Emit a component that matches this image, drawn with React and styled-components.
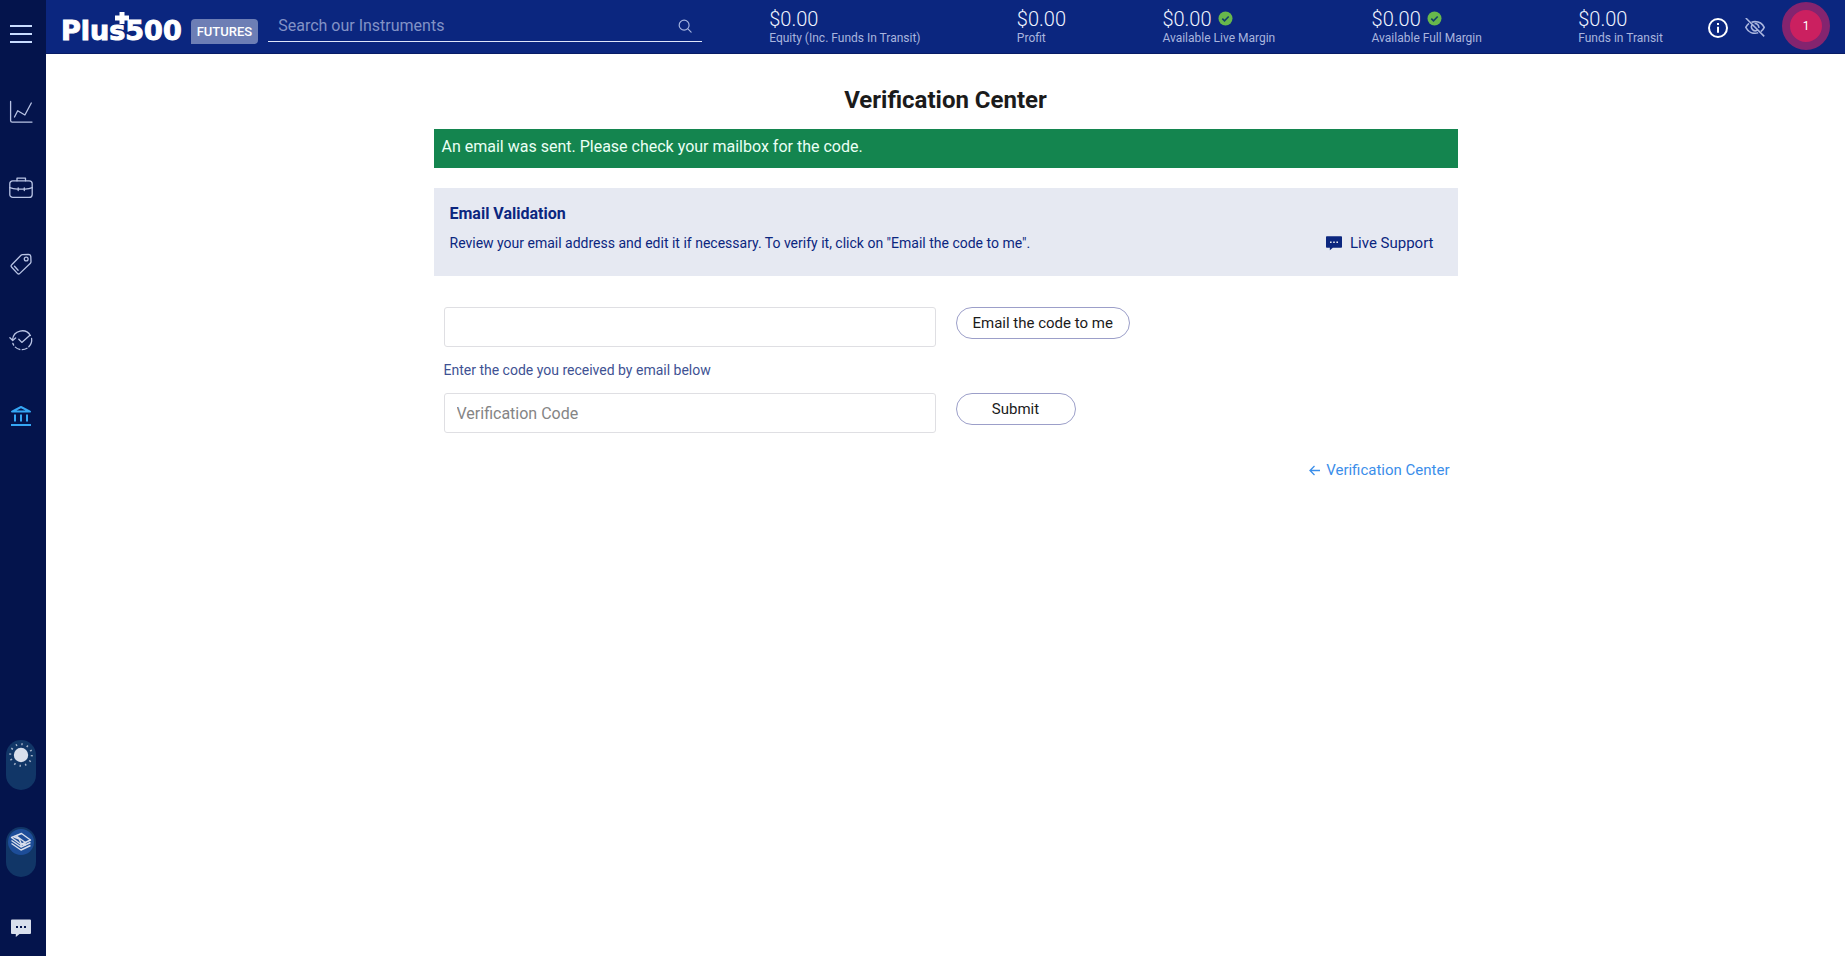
import styled, { createGlobalStyle } from "styled-components"

const GlobalStyle = createGlobalStyle`
    * {
        box-sizing: border-box;
    }
    body {
        margin: 0;
        background: #fff;
        color: #1b1b1b;
        font-family: Roboto, "Liberation Sans", sans-serif;
        font-size: 16px;
    }
    button, input {
        font-family: inherit;
    }
`

const Page = styled.div`
    display: flex;
    min-height: 100vh;
`

const Sidebar = styled.nav`
    width: 46px;
    flex-shrink: 0;
    display: flex;
    flex-direction: column;
    justify-content: space-between;
    align-items: flex-start;
    padding: 20px 0 14px;
    background: #04144c;
`

const SideGroup = styled.div`
    width: 42px;
    display: flex;
    flex-direction: column;
    align-items: center;
    gap: ${({ $gap }) => $gap}px;
`

const IconButton = styled.button`
    display: flex;
    align-items: center;
    justify-content: center;
    padding: 0;
    height: 28px;
    border: none;
    background: none;
    color: ${({ $color }) => $color};
    cursor: pointer;
`

const HeaderButton = styled(IconButton)`
    height: 32px;
    padding-top: 4px;
`

const SideLink = styled.a`
    display: flex;
    color: ${({ $active }) => ($active ? "#35a7f5" : "#b9c4e4")};
`

const Toggle = styled.button`
    display: flex;
    justify-content: center;
    align-items: flex-start;
    width: 30px;
    height: 50px;
    padding: 0;
    border: none;
    border-radius: 15px;
    background: #113667;
    color: #d9dfec;
    cursor: pointer;
`

const Content = styled.div`
    flex: 1;
    min-width: 0;
`

const TopBar = styled.header`
    display: flex;
    align-items: center;
    height: 54px;
    padding: 0 15px 2px;
    background: #0b267f;
    border-bottom: 1px solid #081c66;
`

const Logo = styled.a`
    position: relative;
    height: 28px;
    margin-right: 9px;
    color: #fff;
    font: bold 27px/38px "DejaVu Sans", sans-serif;
    -webkit-text-stroke: 1px #fff;
    text-decoration: none;
`

const LogoCross = styled.svg`
    position: absolute;
    top: 0;
    left: 54px;
`

const Badge = styled.span`
    height: 25px;
    margin: 11px 10px 0 0;
    padding: 0 6px;
    border-radius: 4px 4px 4px 0;
    background: #6d7eb5;
    color: #fff;
    font-size: 13px;
    font-weight: 500;
    line-height: 25px;
`

const SearchBox = styled.label`
    display: flex;
    align-items: center;
    width: 434px;
    height: 32px;
    margin-bottom: 9px;
    padding: 0 10px;
    align-self: flex-end;
    border-bottom: 1px solid #dfe6fa;
    color: #a4b3df;
`

const SearchInput = styled.input`
    flex: 1;
    min-width: 0;
    padding: 0;
    border: none;
    outline: none;
    background: none;
    color: #fff;
    font-size: 16px;
    &::placeholder {
        color: #8292c6;
        opacity: 1;
    }
`

const Stats = styled.dl`
    flex: 1;
    display: flex;
    justify-content: space-between;
    margin: 0 45px 0 67px;
`

const Stat = styled.div`
    display: flex;
    flex-direction: column-reverse;
    white-space: nowrap;
`

const StatLabel = styled.dt`
    color: #a9b5de;
    font-size: 12px;
    line-height: 14px;
`

const StatValue = styled.dd`
    display: flex;
    align-items: center;
    gap: 6px;
    margin: 0;
    color: #f1f5ff;
    font-size: 20px;
    font-weight: 300;
    line-height: 24px;
`

const Actions = styled.div`
    display: flex;
    align-items: center;
    gap: 17px;
`

const Notifications = styled.button`
    width: 48px;
    height: 48px;
    padding: 0;
    border: 8px solid #84246f;
    border-radius: 50%;
    background: #cb2060;
    color: #fff;
    font-size: 12px;
`

const Main = styled.main`
    max-width: 1024px;
    margin: 0 auto;
    padding-top: 30px;
`

const Title = styled.h1`
    margin: 0;
    font-size: 24px;
    font-weight: 700;
    line-height: 32px;
    text-align: center;
`

const Banner = styled.p`
    height: 39px;
    margin: 13px 0 20px;
    padding: 0 8px;
    background: #14854f;
    color: #eafff4;
    font-size: 16px;
    line-height: 35px;
`

const Panel = styled.section`
    padding: 17px 24px 22px 16px;
    background: #e6e9f2;
    color: #0b267f;
`

const PanelTitle = styled.h2`
    margin: 0 0 9px;
    font-size: 16px;
    font-weight: 700;
    line-height: 18px;
`

const PanelRow = styled.div`
    display: flex;
    justify-content: space-between;
    align-items: center;
    font-size: 14px;
    line-height: 22px;
`

const SupportLink = styled.a`
    display: flex;
    align-items: center;
    gap: 8px;
    color: inherit;
    font-size: 15px;
    text-decoration: none;
`

const Form = styled.form`
    display: grid;
    grid-template-columns: 492px 1fr;
    column-gap: 20px;
    align-items: start;
    justify-items: start;
    padding: 31px 10px 0;
`

const TextBox = styled.input`
    width: 100%;
    height: 40px;
    padding: 0 12px;
    border: 1px solid #dfdfe3;
    border-radius: 3px;
    background: #fff;
    color: #1b1b1b;
    font-size: 16px;
    &::placeholder {
        color: #858585;
        opacity: 1;
    }
`

const Hint = styled.label`
    grid-column: 1 / -1;
    color: #405293;
    font-size: 14px;
    line-height: 46px;
`

const PillButton = styled.button`
    min-width: 120px;
    height: 32px;
    padding: 0 16px;
    border: 1px solid #9c9fc9;
    border-radius: 16px;
    background: #fff;
    color: #1b1b1b;
    font-size: 15px;
    cursor: pointer;
`

const BackLink = styled.a`
    display: flex;
    align-items: center;
    justify-content: flex-end;
    gap: 6px;
    margin-top: 26px;
    padding-right: 8px;
    color: #3b8eea;
    font-size: 15px;
    line-height: 22px;
    text-decoration: none;
`

const MenuIcon = () => (
    <svg width="22" height="20" viewBox="0 0 22 20" stroke="currentColor" strokeWidth="2">
        <path d="M0 2h22M0 10h22M0 18h22" />
    </svg>
)

const LineIcon = ({ children, size = 24, width = 1.3 }) => (
    <svg
        width={size}
        height={size}
        viewBox="0 0 24 24"
        fill="none"
        stroke="currentColor"
        strokeWidth={width}
        strokeLinecap="round"
        strokeLinejoin="round"
    >
        {children}
    </svg>
)

const ChartIcon = () => (
    <LineIcon>
        <path d="M1.6 1.5v19a1.6 1.6 0 0 0 1.6 1.6H23" />
        <path d="M5.5 17l3.2-6.2 7.2 4.2L22.3 3" />
    </LineIcon>
)

const BriefcaseIcon = () => (
    <LineIcon>
        <path d="M8 4.8V2.2h8.5v2.6" />
        <rect x="0.8" y="4.8" width="22.4" height="16.6" rx="3" />
        <path d="M.8 11.6c2.5 1 5 1.4 7.6 1.6M10 13.2h4.6M16 13.2c2.6-.2 5-.6 7.2-1.6M9.2 11.8v2.8M15.3 11.8v2.8" />
    </LineIcon>
)

const TagIcon = () => (
    <LineIcon>
        <path d="M13.4 2.6l6-.2a2.4 2.4 0 0 1 2.4 2.2l.2 5.2a2 2 0 0 1-.6 1.4L10.6 21.6a1.4 1.4 0 0 1-2 0L2.5 15a1.4 1.4 0 0 1 0-2L12 3.2a2 2 0 0 1 1.4-.6z" />
        <circle cx="17.2" cy="7" r="1.9" />
        <path d="M5.5 14.2l3.6 4" />
    </LineIcon>
)

const HistoryIcon = () => (
    <LineIcon>
        <path d="M3.6 11.5A9.6 9.6 0 0 1 21.4 7.5" />
        <path d="M22.6 10.5a9.7 9.7 0 0 1-2.8 8.3" />
        <path d="M18 20.3a9.7 9.7 0 0 1-14.2-5" strokeDasharray="5 2.5" />
        <path d="M.9 9.8l2.8 2.7 2.9-2.5" />
        <path d="M9.8 11.2l3 3.2 7.8-7" />
    </LineIcon>
)

const BankIcon = () => (
    <svg width="24" height="24" viewBox="0 0 24 24" fill="none" stroke="currentColor" strokeWidth="2">
        <path d="M3 7.6L12 3l9 4.600z" strokeLinejoin="round" />
        <path d="M6 10.5v7M12 10.5v7M18 10.5v7M2 21h20" />
    </svg>
)

const SunIcon = () => (
    <svg width="30" height="30" viewBox="0 0 30 30">
        <circle cx="15" cy="15" r="7.2" fill="currentColor" />
        <circle
            cx="15"
            cy="15"
            r="10.8"
            fill="none"
            stroke="currentColor"
            strokeWidth="2"
            strokeDasharray="1.4 4.255"
            opacity="0.75"
        />
    </svg>
)

const CashIcon = () => (
    <svg width="30" height="30" viewBox="0 0 30 30" fill="none" stroke="currentColor" strokeWidth="1.4" strokeLinejoin="round">
        <circle cx="15" cy="15" r="13" fill="#1d4d98" stroke="none" />
        <path d="M5.5 10.5L15.5 6.5l9 6.5-9.5 4.500z" />
        <path d="M10 8.8l9 6.400v3l-3.8-1.600-2-4.600-5-2" />
        <path d="M5.5 13.5l9.5 6.500 9.5-4.500M5.5 16.500l9.500 6.500 9.500-4.500M15 17.500v2.500" />
    </svg>
)

const ChatIcon = ({ size, dots }) => (
    <svg width={size} height={size} viewBox="0 0 20 20">
        <path d="M1 1.5h18a1 1 0 0 1 1 1V15a1 1 0 0 1-1 1H8.5L4.8 19v-3H1a1 1 0 0 1-1-1V2.5a1 1 0 0 1 1-1z" fill="currentColor" />
        <path d="M5 8h2v2H5zM9 8h2v2H9zM13 8h2v2h-2z" fill={dots} />
    </svg>
)

const SearchIcon = () => (
    <LineIcon size={14} width={2}>
        <circle cx="10.5" cy="10.5" r="8.5" />
        <path d="M17 17l5.5 5.5" />
    </LineIcon>
)

const CheckIcon = () => (
    <svg width="15" height="15" viewBox="0 0 15 15">
        <circle cx="7.5" cy="7.5" r="7" fill="#68b84c" />
        <path d="M4.3 7.7l2.2 2.1 4.2-4.3" fill="none" stroke="#12406a" strokeWidth="1.6" />
    </svg>
)

const InfoIcon = () => (
    <svg width="20" height="20" viewBox="0 0 20 20" fill="none" stroke="currentColor" strokeWidth="2">
        <circle cx="10" cy="10" r="9" />
        <path d="M10 8.8v6M10 5v2" />
    </svg>
)

const EyeOffIcon = () => (
    <svg width="20" height="20" viewBox="0 0 20 20" fill="none" stroke="currentColor" strokeWidth="1.6">
        <path d="M6.5 4.2A10 10 0 0 1 10 3.600c4.300 0 7.600 2.400 9.200 5.800a10 10 0 0 1-3.400 4.200M13.200 14.800c-5 1.400-10-.6-12.400-5.400A10 10 0 0 1 4 5.400" />
        <path d="M7.200 6.700a3.800 3.800 0 0 0 5.300 5.300M9.600 5.600a3.800 3.800 0 0 1 4.200 4.200M.8 0l18.400 18.400" />
    </svg>
)

const ArrowIcon = () => (
    <svg width="11" height="11" viewBox="0 0 11 11" fill="none" stroke="currentColor" strokeWidth="1.3">
        <path d="M11 5.5H1M5.5 1L1 5.5 5.5 10" />
    </svg>
)

const navItems = [
    { name: "Trade", Icon: ChartIcon },
    { name: "Positions", Icon: BriefcaseIcon },
    { name: "Orders", Icon: TagIcon },
    { name: "History", Icon: HistoryIcon },
    { name: "Funds", Icon: BankIcon, active: true },
]

const stats = [
    { label: "Equity (Inc. Funds In Transit)", value: "$0.00" },
    { label: "Profit", value: "$0.00" },
    { label: "Available Live Margin", value: "$0.00", ok: true },
    { label: "Available Full Margin", value: "$0.00", ok: true },
    { label: "Funds in Transit", value: "$0.00" },
]

const SideMenu = () => (
    <Sidebar>
        <SideGroup $gap={52}>
            <IconButton type="button" aria-label="Menu" $color="#c9dcff">
                <MenuIcon />
            </IconButton>
            {navItems.map(({ name, Icon, active }) => (
                <SideLink key={name} href="#" aria-label={name} $active={active}>
                    <Icon />
                </SideLink>
            ))}
        </SideGroup>
        <SideGroup $gap={37}>
            <Toggle type="button" aria-label="Light theme">
                <SunIcon />
            </Toggle>
            <Toggle type="button" aria-label="Real money">
                <CashIcon />
            </Toggle>
            <IconButton type="button" aria-label="Chat" $color="#d9dfec">
                <ChatIcon size={20} dots="#04144c" />
            </IconButton>
        </SideGroup>
    </Sidebar>
)

const Header = () => (
    <TopBar>
        <Logo href="#">
            Plus500
            <LogoCross width="14" height="12" viewBox="0 0 14 12">
                <path d="M4.500 0h5v3.500H14v5H9.500V12h-5V8.500H0v-5h4.500z" fill="#fff" />
            </LogoCross>
        </Logo>
        <Badge>FUTURES</Badge>
        <SearchBox>
            <SearchInput type="text" aria-label="Search" placeholder="Search our Instruments" />
            <SearchIcon />
        </SearchBox>
        <Stats>
            {stats.map(({ label, value, ok }) => (
                <Stat key={label}>
                    <StatLabel>{label}</StatLabel>
                    <StatValue>
                        {value}
                        {ok && <CheckIcon />}
                    </StatValue>
                </Stat>
            ))}
        </Stats>
        <Actions>
            <HeaderButton type="button" aria-label="Account info" $color="#fff">
                <InfoIcon />
            </HeaderButton>
            <HeaderButton type="button" aria-label="Hide balances" $color="#a9b5de">
                <EyeOffIcon />
            </HeaderButton>
            <Notifications type="button">1</Notifications>
        </Actions>
    </TopBar>
)

export default function App() {
    return (
        <Page>
            <GlobalStyle />
            <SideMenu />
            <Content>
                <Header />
                <Main>
                    <Title>Verification Center</Title>
                    <Banner>An email was sent. Please check your mailbox for the code.</Banner>
                    <Panel>
                        <PanelTitle>Email Validation</PanelTitle>
                        <PanelRow>
                            <span>Review your email address and edit it if necessary. To verify it, click on "Email the code to me".</span>
                            <SupportLink href="#">
                                <ChatIcon size={16} dots="#e6e9f2" />
                                Live Support
                            </SupportLink>
                        </PanelRow>
                    </Panel>
                    <Form>
                        <TextBox type="email" aria-label="Email address" />
                        <PillButton type="button">Email the code to me</PillButton>
                        <Hint htmlFor="code">Enter the code you received by email below</Hint>
                        <TextBox id="code" type="text" placeholder="Verification Code" />
                        <PillButton type="button">Submit</PillButton>
                    </Form>
                    <BackLink href="#">
                        <ArrowIcon />
                        Verification Center
                    </BackLink>
                </Main>
            </Content>
        </Page>
    )
}
